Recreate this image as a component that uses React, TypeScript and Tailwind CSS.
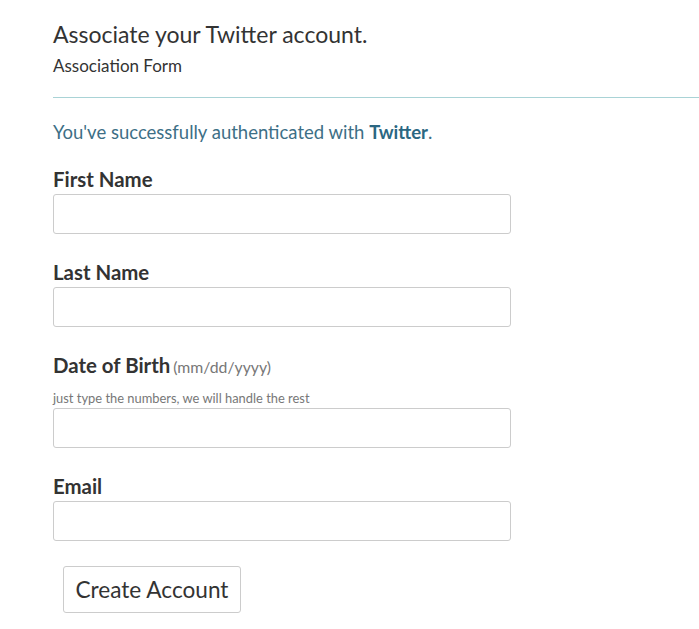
import React from 'react';

const font = { fontFamily: 'Lato, "Open Sans", sans-serif' };

function Field({ label, extra, hint, mt }: { label: string; extra?: string; hint?: string; mt: string }) {
  return (
    <div className={mt}>
      <label className="block text-[20.4px] font-bold leading-[26px] text-[#333]">
        {label}
        {extra && <span className="ml-[3px] text-[15.8px] font-normal text-[#777]">{extra}</span>}
      </label>
      {hint && <p className="mt-[10px] text-[12.9px] leading-[16px] text-[#777]">{hint}</p>}
      <input
        type="text"
        className="mt-[2px] block h-[40px] w-[458px] rounded-[3px] border border-[#ccc] bg-white px-3 outline-none"
      />
    </div>
  );
}

export default function App() {
  return (
    <div className="min-h-screen bg-white pl-[53px] pt-[19px]" style={font}>
      <h1 className="text-[23px] leading-[30px] text-[#333]">Associate your Twitter account.</h1>
      <p className="mt-[6px] text-[17px] leading-[22px] text-[#333]">Association Form</p>
      <hr className="mt-[20px] border-0 border-t border-[#a9d3d6]" />

      <p className="mt-[22px] text-[18.5px] leading-[24px] text-[#3d6f86]">
        You've successfully authenticated with <b className="text-[#2b6782]">Twitter</b>.
      </p>

      <Field label="First Name" mt="mt-[22px]" />
      <Field label="Last Name" mt="mt-[25px]" />
      <Field label="Date of Birth" extra="(mm/dd/yyyy)" hint="just type the numbers, we will handle the rest" mt="mt-[25px]" />
      <Field label="Email" mt="mt-[25px]" />

      <button className="ml-[10px] mt-[25px] h-[47px] w-[178px] rounded-[3px] border border-[#ccc] bg-white text-[22.6px] text-[#333]">
        Create Account
      </button>
    </div>
  );
}
